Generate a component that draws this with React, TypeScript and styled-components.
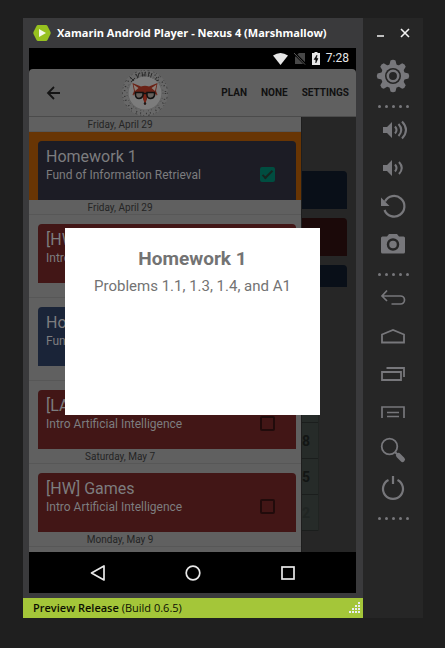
import React from "react";
import styled, { createGlobalStyle } from "styled-components";

const GlobalStyle = createGlobalStyle`
  *, *::before, *::after { box-sizing: border-box; }
  body { margin: 0; background: #1f1f1f; }
  button { border: 0; padding: 0; margin: 0; background: none; color: inherit; font: inherit; cursor: pointer; }
  h1, h2, h3, p { margin: 0; }
  svg { display: block; }
`;

const uiFont = `"Open Sans", "Noto Sans", sans-serif`;
const androidFont = `Roboto, "Noto Sans", sans-serif`;

const Desktop = styled.div`
  min-height: 100vh;
  padding: 18px 22px 30px 23px;
  background: #1f1f1f;
`;

const PlayerWindow = styled.div`
  display: flex;
`;

const Player = styled.div`
  flex: 1;
  min-width: 0;
  display: flex;
  flex-direction: column;
  background: #3a3a3c;
`;

const TitleBar = styled.header`
  display: flex;
  align-items: center;
  gap: 6px;
  height: 30px;
  padding-left: 10px;
  color: #fff;
  font: 700 11px/18px ${uiFont};
  white-space: nowrap;
`;

const WindowTitle = styled.h1`
  font: inherit;
`;

const Screen = styled.div`
  position: relative;
  margin: 0 7px 5px 6px;
  background: #000;
  font-family: ${androidFont};
`;

const StatusBar = styled.div`
  display: flex;
  align-items: center;
  justify-content: flex-end;
  gap: 6px;
  height: 21px;
  padding-right: 7px;
  color: #e6e6e6;
  font-size: 12px;
  line-height: 21px;
`;

const AppBar = styled.div`
  display: flex;
  align-items: center;
  height: 48px;
  padding: 0 7px 0 17px;
  background: #606060;
  border-radius: 4px 4px 0 0;
  border-bottom: 1px solid #4b4b4b;
  color: #111;
`;

const LogoSlot = styled.div`
  margin-left: 60px;
`;

const Menu = styled.nav`
  display: flex;
  gap: 14px;
  margin-left: auto;
`;

const MenuButton = styled.button`
  font-size: 10px;
  font-weight: 700;
  line-height: 18px;
`;

const Content = styled.div`
  display: flex;
  background: #262626;
`;

const TaskList = styled.ul`
  flex: 1;
  min-width: 0;
  margin: 0;
  padding: 0 0 5px;
  list-style: none;
  background: #606060;
`;

const DateLabel = styled.div`
  height: 15px;
  border-bottom: 1px solid #575757;
  color: #242424;
  font-size: 10px;
  line-height: 15px;

  span {
    display: block;
    width: 67%;
    text-align: center;
  }
`;

const CardArea = styled.div<{ $selected?: boolean }>`
  padding: 9px 5px 0 9px;
  background: ${(p) => (p.$selected ? "#683504" : "#606060")};
`;

const cardColors = { slate: "#1c1c25", red: "#421616", blue: "#1a2438" };
type Tone = keyof typeof cardColors;

const Card = styled.div<{ $tone: Tone }>`
  display: flex;
  justify-content: space-between;
  height: 59px;
  padding: 6px 21px 0 8px;
  border-radius: 4px 4px 0 0;
  background: ${(p) => cardColors[p.$tone]};
  color: #7d7d7f;
`;

const CardTitle = styled.h3`
  font-size: 16px;
  font-weight: 400;
  line-height: 20px;
  white-space: nowrap;
`;

const CardCourse = styled.p`
  font-size: 12px;
  line-height: 16px;
  white-space: nowrap;
`;

const CheckBox = styled.input`
  appearance: none;
  display: grid;
  place-items: center;
  width: 15px;
  height: 15px;
  margin: 20px 0 0;
  border: 2px solid #210b0b;
  border-radius: 2px;

  &:checked {
    border-color: #004d40;
    background: #004d40;
  }

  &:checked::after {
    content: "";
    width: 11px;
    height: 5px;
    border: solid #17241f;
    border-width: 0 0 2px 2px;
    transform: translateY(-1px) rotate(-45deg);
  }
`;

const SidePane = styled.div`
  display: flex;
  flex-direction: column;
  width: 55px;
  padding-top: 54px;
  border-left: 1px solid #1e1e1e;
  background: #262626;
`;

const SideCard = styled.div<{ $tone: "red" | "blue"; $short?: boolean }>`
  height: ${(p) => (p.$short ? 22 : 38)}px;
  margin: 0 9px 9px 0;
  border-radius: 0 4px 0 0;
  background: ${(p) => (p.$tone === "red" ? "#1b0909" : "#090f18")};
`;

const DayColumn = styled.div`
  width: 17px;
  margin-top: auto;
  margin-bottom: 21px;
  border-right: 1px solid #202422;
  background: #262b29;
`;

const Day = styled.div<{ $faint?: boolean }>`
  height: 36px;
  border-bottom: 1px solid #1b1e1d;
  color: ${(p) => (p.$faint ? "#202523" : "#121514")};
  font-size: 14px;
  font-weight: 700;
  line-height: 36px;
`;

const Dialog = styled.section`
  position: absolute;
  top: 180px;
  left: 36px;
  right: 36px;
  height: 187px;
  padding-top: 18px;
  background: #fff;
  color: #737373;
  text-align: center;
`;

const DialogTitle = styled.h2`
  font-size: 19px;
  font-weight: 700;
  line-height: 26px;
`;

const DialogText = styled.p`
  margin-top: 2px;
  font-size: 15px;
  line-height: 24px;
`;

const NavBar = styled.nav`
  display: flex;
  justify-content: center;
  height: 41px;
`;

const NavButton = styled.button`
  display: grid;
  place-items: center;
  width: 95px;
`;

const Footer = styled.footer`
  display: flex;
  align-items: center;
  justify-content: space-between;
  height: 20px;
  padding: 0 2px 0 10px;
  background: #a4c639;
  color: #0c0f02;
  font: 400 11px/18px ${uiFont};

  strong { font-weight: 600; }
`;

const Tools = styled.aside`
  display: flex;
  flex-direction: column;
  align-items: center;
  width: 60px;
  background: #262626;
  color: #77777b;
`;

const WindowControls = styled.div`
  display: flex;
  gap: 4px;
  height: 30px;
  margin-bottom: 9px;
  color: #f2f2f2;
`;

const ControlButton = styled.button`
  display: grid;
  place-items: center;
  width: 20px;
`;

const ToolButton = styled.button`
  width: 38px;
  height: 38px;
`;

const Dots = styled.div`
  display: flex;
  align-items: flex-end;
  gap: 4px;
  height: 16px;
  padding-bottom: 3px;

  i {
    width: 3px;
    height: 3px;
    border-radius: 50%;
    background: #77777b;
  }
`;

const Divider = () => (
  <Dots aria-hidden="true">
    <i /><i /><i /><i /><i />
  </Dots>
);

type ToolProps = { label: string; children: React.ReactNode };

const Tool = ({ label, children }: ToolProps) => (
  <ToolButton type="button" aria-label={label}>
    <svg width="38" height="38" viewBox="0 0 38 38" fill="none" stroke="currentColor" strokeWidth="2">
      {children}
    </svg>
  </ToolButton>
);

const FoxLogo = () => (
  <svg width="48" height="48" viewBox="0 0 48 48" role="img" aria-label="Fox with glasses">
    <circle cx="24" cy="24" r="20" fill="none" stroke="#686868" strokeWidth="6" />
    <circle cx="24" cy="24" r="22.5" fill="none" stroke="#333" strokeWidth=".8" strokeDasharray="1 3 2 4 1 2" />
    <circle cx="24" cy="24" r="18" fill="none" stroke="#484848" strokeDasharray="1 4 1 2" />
    <circle cx="24" cy="24" r="20.5" fill="none" stroke="#333" strokeWidth="1.500" strokeDasharray="1 5 1 3" />
    <path d="M9 8l5 5M14 9l-4 4M15 5l3 6M18 4l-2 7M21 3l1 6M21 6h3M24 3v6M28 3l-1 6M31 4l-2 6h3M36 8l-3 4M35 12l3-1" stroke="#2c2c2c" fill="none" />
    <circle cx="24" cy="24" r="16.5" fill="#7c7c7c" />
    <path d="M11.500 14l8.500 3.500q4-1.500 8 0l8.500-3.500-1.500 8 1.500 4-6.500 2-4 2-2 5-2-5-4-2-6.500-2 1.500-4z" fill="#6a2216" />
    <path d="M12.500 15.500l5 3.500-3.500 3zM35.500 15.500l-5 3.500 3.500 3z" fill="#8a7d76" />
    <path d="M12 26l5-2 5 4v3l-5-2zM36 26l-5-2-5 4v3l5-2z" fill="#858585" />
    <path d="M22.500 25h3l-1 11h-1z" fill="#792417" />
    <path d="M14.500 23.500h7.500v3q-1 3-4 3t-3.500-3zM26 23.500h7.500v3q-1 3-4 3t-3.500-3zM22 24.500h4" fill="#66605b" stroke="#111" strokeWidth="1.500" />
    <circle cx="24" cy="34.500" r="1.200" fill="#191919" />
  </svg>
);

const Gear = () => (
  <>
    <g stroke="none" fill="currentColor">
      {[0, 45, 90, 135].map((a) => (
        <path key={a} d="M16.500 3.500q2.500-1.500 5 0l1.500 6v19l-1.500 6q-2.500 1.500-5 0l-1.500-6v-19z" transform={`rotate(${a} 19 19)`} />
      ))}
      <circle cx="19" cy="19" r="12" />
    </g>
    <circle cx="19" cy="19" r="8" fill="#262626" stroke="none" />
    <circle cx="19" cy="19" r="5.200" strokeWidth="2.500" />
  </>
);

type Task = { date: string; title: string; course: string; tone: Tone; done?: boolean };

const tasks: Task[] = [
  { date: "Friday, April 29", title: "Homework 1", course: "Fund of Information Retrieval", tone: "slate", done: true },
  { date: "Friday, April 29", title: "[HW]", course: "Intro Artificial Intelligence", tone: "red" },
  { date: "", title: "Homework", course: "Fund of Information Retrieval", tone: "blue" },
  { date: "", title: "[LAB]", course: "Intro Artificial Intelligence", tone: "red" },
  { date: "Saturday, May 7", title: "[HW] Games", course: "Intro Artificial Intelligence", tone: "red" },
];

export default function App() {
  return (
    <Desktop>
      <GlobalStyle />
      <PlayerWindow>
        <Player>
          <TitleBar>
            <svg width="18" height="18" viewBox="0 0 18 18" aria-hidden="true">
              <path d="M5 1h8q1 0 1.500 1l3 6q.5 1 0 2l-3 6q-.5 1-1.500 1H5q-1 0-1.500-1l-3-6Q0 9 .5 8l3-6Q4 1 5 1z" fill="#97c11f" />
              <path d="M6 5l7 4-7 4z" fill="#f4f8e8" />
            </svg>
            <WindowTitle>Xamarin Android Player - Nexus 4 (Marshmallow)</WindowTitle>
          </TitleBar>

          <Screen>
            <StatusBar>
              <svg width="15" height="12" viewBox="0 0 15 12" aria-label="Wi-Fi">
                <path d="M0 2.500Q7.500-2.500 15 2.500L7.500 12z" fill="#e6e6e6" />
              </svg>
              <svg width="12" height="13" viewBox="0 0 12 13" aria-label="No SIM">
                <path d="M5 1h6v11H1V5z" fill="#484848" />
                <path d="M0 1l11 11" stroke="#000" strokeWidth="2.500" />
                <path d="M0 1l11 11.500" stroke="#5a5a5a" strokeWidth="1" />
              </svg>
              <svg width="8" height="13" viewBox="0 0 8 13" aria-label="Battery charging">
                <path d="M2.500 0h3v1H8v12H0V1h2.500z" fill="#e6e6e6" />
                <path d="M5 3L2 7.500h1.800V11L6 6.500H4.500z" fill="#000" stroke="#000" strokeWidth=".5" />
              </svg>
              <time>7:28</time>
            </StatusBar>

            <AppBar>
              <button type="button" aria-label="Back">
                <svg width="15" height="14" viewBox="0 0 15 14" fill="none" stroke="#141414" strokeWidth="1.800">
                  <path d="M14 7H2M8 1L2 7l6 6" />
                </svg>
              </button>
              <LogoSlot><FoxLogo /></LogoSlot>
              <Menu>
                <MenuButton type="button">PLAN</MenuButton>
                <MenuButton type="button">NONE</MenuButton>
                <MenuButton type="button">SETTINGS</MenuButton>
              </Menu>
            </AppBar>

            <Content>
              <TaskList>
                {tasks.map((task, i) => (
                  <li key={i}>
                    <DateLabel><span>{task.date}</span></DateLabel>
                    <CardArea $selected={task.done}>
                      <Card $tone={task.tone}>
                        <div>
                          <CardTitle>{task.title}</CardTitle>
                          <CardCourse>{task.course}</CardCourse>
                        </div>
                        <CheckBox type="checkbox" aria-label={`${task.title} done`} defaultChecked={task.done} />
                      </Card>
                    </CardArea>
                  </li>
                ))}
                <li><DateLabel><span>Monday, May 9</span></DateLabel></li>
              </TaskList>
              <SidePane>
                <SideCard $tone="blue" />
                <SideCard $tone="red" />
                <SideCard $tone="blue" $short />
                <DayColumn>
                  <Day />
                  <Day>8</Day>
                  <Day>5</Day>
                  <Day $faint>2</Day>
                </DayColumn>
              </SidePane>
            </Content>

            <NavBar>
              <NavButton type="button" aria-label="Back">
                <svg width="16" height="16" viewBox="0 0 16 16" fill="none" stroke="#e8e8e8" strokeWidth="1.700" strokeLinejoin="round">
                  <path d="M14 1v14L1.500 8z" />
                </svg>
              </NavButton>
              <NavButton type="button" aria-label="Home">
                <svg width="16" height="16" viewBox="0 0 16 16" fill="none" stroke="#e8e8e8" strokeWidth="1.700">
                  <circle cx="8" cy="8" r="6.800" />
                </svg>
              </NavButton>
              <NavButton type="button" aria-label="Overview">
                <svg width="16" height="16" viewBox="0 0 16 16" fill="none" stroke="#e8e8e8" strokeWidth="1.700">
                  <rect x="2" y="2" width="12" height="12" />
                </svg>
              </NavButton>
            </NavBar>

            <Dialog role="dialog" aria-labelledby="task-title">
              <DialogTitle id="task-title">Homework 1</DialogTitle>
              <DialogText>Problems 1.1, 1.3, 1.4, and A1</DialogText>
            </Dialog>
          </Screen>

          <Footer>
            <span><strong>Preview Release</strong> (Build 0.6.5)</span>
            <svg width="12" height="12" viewBox="0 0 12 12" aria-hidden="true">
              {[[9, 0], [6, 3], [9, 3], [3, 6], [6, 6], [9, 6], [0, 9], [3, 9], [6, 9], [9, 9]].map(([x, y]) => (
                <rect key={`${x}-${y}`} x={x} y={y} width="2" height="2" fill="#e8ecf0" />
              ))}
            </svg>
          </Footer>
        </Player>

        <Tools aria-label="Device controls">
          <WindowControls>
            <ControlButton type="button" aria-label="Minimize">
              <svg width="10" height="10" viewBox="0 0 10 10"><path d="M1 8h7" stroke="currentColor" strokeWidth="1.500" /></svg>
            </ControlButton>
            <ControlButton type="button" aria-label="Close">
              <svg width="10" height="10" viewBox="0 0 10 10"><path d="M1 1l8 8M9 1L1 9" stroke="currentColor" strokeWidth="1.600" /></svg>
            </ControlButton>
          </WindowControls>
          <Tool label="Settings"><Gear /></Tool>
          <Divider />
          <Tool label="Volume up">
            <path d="M9 16h4l5-5v16l-5-5H9z" fill="currentColor" stroke="none" />
            <path d="M21 15.500q3 3.500 0 7M24.500 13q5.500 6 0 12M28 10.500q8 8.500 0 17" />
          </Tool>
          <Tool label="Volume down">
            <path d="M9 16h4l5-5v16l-5-5H9z" fill="currentColor" stroke="none" />
            <path d="M21 15.500q3 3.500 0 7M25 13q5.500 6 0 12" />
          </Tool>
          <Tool label="Rotate">
            <path d="M11 14.500A10.300 10.300 0 1 1 10.500 23" strokeWidth="2.200" />
            <path d="M7 10.500v8.500h8.500z" fill="currentColor" stroke="none" />
          </Tool>
          <Tool label="Screenshot">
            <path d="M8.500 11.500H13l2-2.500h8l2 2.500h4.500q1.500 0 1.500 1.500v14q0 1.500-1.500 1.500h-21Q7 28.500 7 27V13q0-1.500 1.500-1.500z" fill="currentColor" stroke="none" />
            <circle cx="19" cy="19.500" r="5" stroke="#262626" strokeWidth="2.500" />
          </Tool>
          <Divider />
          <Tool label="Back">
            <path d="M13 11.500L8 17l5 5M8 17h18.500a4 4 0 0 1 0 8H17.500" strokeWidth="1.700" />
          </Tool>
          <Tool label="Home">
            <path d="M8 17.500l11-4.500 11 4.500v8H8z" strokeWidth="1.800" />
          </Tool>
          <Tool label="Recent apps">
            <path d="M8 17h19v8H8zM12.500 13H30v9" strokeWidth="1.800" />
          </Tool>
          <Tool label="Menu">
            <path d="M8 25V14h22v11M13 19.500h12M13 23.500h12" strokeWidth="1.700" />
          </Tool>
          <Tool label="Search">
            <circle cx="15.500" cy="15.500" r="7.800" strokeWidth="1.800" />
            <path d="M21 21l4 4" />
            <path d="M24.500 24.500l4 4" strokeWidth="5" strokeLinecap="round" />
          </Tool>
          <Tool label="Power">
            <path d="M14.500 11A10 10 0 1 0 23.500 11M19 7v8" strokeWidth="2.200" />
          </Tool>
          <Divider />
        </Tools>
      </PlayerWindow>
    </Desktop>
  );
}
